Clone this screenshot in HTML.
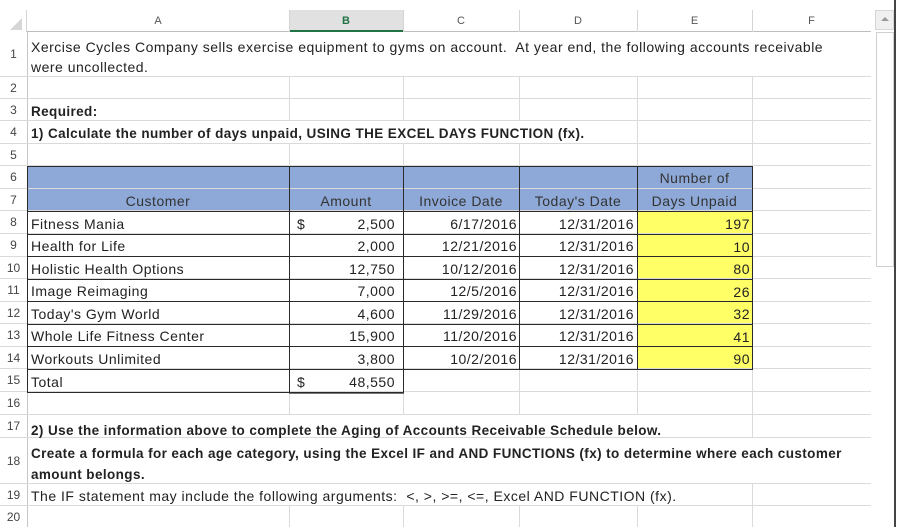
<!DOCTYPE html>
<html><head><meta charset="utf-8"><style>
*{margin:0;padding:0;box-sizing:border-box}
body{width:911px;height:527px;overflow:hidden;background:#fff;position:relative;font-family:"Liberation Sans",Arial,sans-serif;font-size:14px;color:#222;letter-spacing:.5px}
div{position:absolute}
.gv{width:1px;background:#dadada;top:32px;height:495px}
.gh{height:1px;background:#dadada;left:0;width:871px}
.dv{width:1px;background:#2a2a2a}
.dh{height:1px;background:#2a2a2a}
.rh{left:0;width:27px;text-align:center;font-size:12px;color:#444;letter-spacing:0}
.t{white-space:nowrap;padding:0 3px}
.b{font-weight:bold;font-size:13.5px;letter-spacing:.4px}
.r{text-align:right}
.c{text-align:center}
.ch{top:10px;height:22px;line-height:22px;text-align:center;font-size:11px;color:#555;letter-spacing:0}
</style></head><body>
<div style="left:27px;top:166px;width:725px;height:45px;background:#8ea9d7"></div>
<div style="left:637px;top:211px;width:115px;height:158px;background:#ffff66"></div>
<div style="left:0;top:10px;width:27px;height:22px;border-right:1px solid #d4d4d4"></div>
<div style="left:10px;top:18px;width:0;height:0;border-left:12px solid transparent;border-bottom:12px solid #d6d6d6"></div>
<div style="left:27px;top:31px;width:844px;height:1px;background:#bdbdbd"></div>
<div style="left:289px;top:10px;width:114px;height:22px;background:#e1e1e1;border-bottom:2px solid #217346"></div>
<div class="ch" style="left:27px;width:262px">A</div>
<div class="ch" style="left:289px;width:114px;color:#217346;font-weight:bold">B</div>
<div class="ch" style="left:403px;width:116px">C</div>
<div class="ch" style="left:519px;width:118px">D</div>
<div class="ch" style="left:637px;width:115px">E</div>
<div class="ch" style="left:752px;width:119px">F</div>
<div style="left:289px;top:10px;width:1px;height:22px;background:#d4d4d4"></div>
<div style="left:403px;top:10px;width:1px;height:22px;background:#d4d4d4"></div>
<div style="left:519px;top:10px;width:1px;height:22px;background:#d4d4d4"></div>
<div style="left:637px;top:10px;width:1px;height:22px;background:#d4d4d4"></div>
<div style="left:752px;top:10px;width:1px;height:22px;background:#d4d4d4"></div>
<div class="gv" style="left:27px;background:#c6c6c6"></div>
<div class="gv" style="left:289px"></div><div class="gv" style="left:403px"></div>
<div class="gv" style="left:519px"></div><div class="gv" style="left:637px"></div>
<div class="gv" style="left:752px"></div><div class="gv" style="left:871px;background:#c6c6c6"></div>
<div class="gh" style="top:76px"></div><div class="gh" style="top:98px"></div>
<div class="gh" style="top:120px"></div><div class="gh" style="top:143px"></div>
<div class="gh" style="top:165px"></div><div class="gh" style="top:188px"></div>
<div class="gh" style="top:210px"></div><div class="gh" style="top:233px"></div>
<div class="gh" style="top:256px"></div><div class="gh" style="top:278px"></div>
<div class="gh" style="top:301px"></div><div class="gh" style="top:323px"></div>
<div class="gh" style="top:346px"></div><div class="gh" style="top:368px"></div>
<div class="gh" style="top:391px"></div><div class="gh" style="top:414px"></div>
<div class="gh" style="top:437px"></div><div class="gh" style="top:483px"></div>
<div class="gh" style="top:505px"></div>
<div style="left:28px;top:32px;width:843px;height:44px;background:#fff"></div>
<div style="left:28px;top:121px;width:609px;height:22px;background:#fff"></div>
<div style="left:28px;top:415px;width:724px;height:22px;background:#fff"></div>
<div style="left:28px;top:438px;width:843px;height:45px;background:#fff"></div>
<div style="left:28px;top:484px;width:724px;height:21px;background:#fff"></div>
<div class="dv" style="left:27px;top:166px;height:226px"></div>
<div class="dv" style="left:289px;top:166px;height:226px"></div>
<div class="dv" style="left:403px;top:166px;height:226px"></div>
<div class="dv" style="left:519px;top:166px;height:203px"></div>
<div class="dv" style="left:637px;top:166px;height:203px"></div>
<div class="dv" style="left:752px;top:166px;height:203px"></div>
<div class="dh" style="left:27px;top:166px;width:726px"></div>
<div class="dh" style="left:27px;top:211px;width:726px"></div>
<div class="dh" style="left:27px;top:234px;width:726px"></div>
<div class="dh" style="left:27px;top:256px;width:726px"></div>
<div class="dh" style="left:27px;top:279px;width:726px"></div>
<div class="dh" style="left:27px;top:301px;width:726px"></div>
<div class="dh" style="left:27px;top:324px;width:726px"></div>
<div class="dh" style="left:27px;top:346px;width:726px"></div>
<div class="dh" style="left:27px;top:369px;width:726px"></div>
<div class="dh" style="left:27px;top:392px;width:377px"></div>
<div class="dh" style="left:289px;top:393px;width:115px;background:#777"></div>
<div class="rh" style="top:32px;height:45px;line-height:45px">1</div>
<div class="rh" style="top:77px;line-height:22px">2</div>
<div class="rh" style="top:99px;line-height:22px">3</div>
<div class="rh" style="top:121px;line-height:23px">4</div>
<div class="rh" style="top:144px;line-height:22px">5</div>
<div class="rh" style="top:166px;line-height:23px">6</div>
<div class="rh" style="top:189px;line-height:22px">7</div>
<div class="rh" style="top:211px;line-height:23px">8</div>
<div class="rh" style="top:234px;line-height:23px">9</div>
<div class="rh" style="top:257px;line-height:22px">10</div>
<div class="rh" style="top:279px;line-height:23px">11</div>
<div class="rh" style="top:302px;line-height:22px">12</div>
<div class="rh" style="top:324px;line-height:23px">13</div>
<div class="rh" style="top:347px;line-height:22px">14</div>
<div class="rh" style="top:369px;line-height:23px">15</div>
<div class="rh" style="top:392px;line-height:23px">16</div>
<div class="rh" style="top:415px;line-height:23px">17</div>
<div class="rh" style="top:438px;height:46px;line-height:46px">18</div>
<div class="rh" style="top:484px;line-height:22px">19</div>
<div class="rh" style="top:506px;line-height:22px">20</div>
<div class="t" style="left:28px;top:37px;line-height:20px;white-space:normal;width:812px">Xercise Cycles Company sells exercise equipment to gyms on account.&nbsp; At year end, the following accounts receivable were uncollected.</div>
<div class="t b" style="left:28px;top:100px;line-height:23px">Required:</div>
<div class="t b" style="left:28px;top:122px;line-height:23px">1) Calculate the number of days unpaid, USING THE EXCEL DAYS FUNCTION (fx).</div>
<div class="t c" style="left:27px;top:190px;width:262px;line-height:23px;color:#333">Customer</div>
<div class="t c" style="left:289px;top:190px;width:114px;line-height:23px;color:#333">Amount</div>
<div class="t c" style="left:403px;top:190px;width:116px;line-height:23px;color:#333">Invoice Date</div>
<div class="t c" style="left:519px;top:190px;width:118px;line-height:23px;color:#333">Today's Date</div>
<div class="t c" style="left:637px;top:167px;width:115px;line-height:23px;color:#333">Number of</div>
<div class="t c" style="left:637px;top:190px;width:115px;line-height:23px;color:#333">Days Unpaid</div>
<div class="t" style="left:28px;top:213px;line-height:23px">Fitness Mania</div>
<div class="t" style="left:28px;top:235px;line-height:23px">Health for Life</div>
<div class="t" style="left:28px;top:258px;line-height:23px">Holistic Health Options</div>
<div class="t" style="left:28px;top:280px;line-height:23px">Image Reimaging</div>
<div class="t" style="left:28px;top:303px;line-height:23px">Today's Gym World</div>
<div class="t" style="left:28px;top:325px;line-height:23px">Whole Life Fitness Center</div>
<div class="t" style="left:28px;top:348px;line-height:23px">Workouts Unlimited</div>
<div class="t" style="left:28px;top:371px;line-height:23px">Total</div>
<div class="t" style="left:294px;top:213px;line-height:23px">$</div>
<div class="t" style="left:294px;top:371px;line-height:23px">$</div>
<div class="t r" style="left:289px;width:109px;top:213px;line-height:23px">2,500</div>
<div class="t r" style="left:289px;width:109px;top:235px;line-height:23px">2,000</div>
<div class="t r" style="left:289px;width:109px;top:258px;line-height:23px">12,750</div>
<div class="t r" style="left:289px;width:109px;top:280px;line-height:23px">7,000</div>
<div class="t r" style="left:289px;width:109px;top:303px;line-height:23px">4,600</div>
<div class="t r" style="left:289px;width:109px;top:325px;line-height:23px">15,900</div>
<div class="t r" style="left:289px;width:109px;top:348px;line-height:23px">3,800</div>
<div class="t r" style="left:289px;width:109px;top:371px;line-height:23px">48,550</div>
<div class="t r" style="left:403px;width:117px;top:213px;line-height:23px">6/17/2016</div>
<div class="t r" style="left:403px;width:117px;top:235px;line-height:23px">12/21/2016</div>
<div class="t r" style="left:403px;width:117px;top:258px;line-height:23px">10/12/2016</div>
<div class="t r" style="left:403px;width:117px;top:280px;line-height:23px">12/5/2016</div>
<div class="t r" style="left:403px;width:117px;top:303px;line-height:23px">11/29/2016</div>
<div class="t r" style="left:403px;width:117px;top:325px;line-height:23px">11/20/2016</div>
<div class="t r" style="left:403px;width:117px;top:348px;line-height:23px">10/2/2016</div>
<div class="t r" style="left:519px;width:118px;top:213px;line-height:23px">12/31/2016</div>
<div class="t r" style="left:519px;width:118px;top:235px;line-height:23px">12/31/2016</div>
<div class="t r" style="left:519px;width:118px;top:258px;line-height:23px">12/31/2016</div>
<div class="t r" style="left:519px;width:118px;top:280px;line-height:23px">12/31/2016</div>
<div class="t r" style="left:519px;width:118px;top:303px;line-height:23px">12/31/2016</div>
<div class="t r" style="left:519px;width:118px;top:325px;line-height:23px">12/31/2016</div>
<div class="t r" style="left:519px;width:118px;top:348px;line-height:23px">12/31/2016</div>
<div class="t r" style="left:637px;width:115px;top:213px;line-height:23px;padding-right:2px">197</div>
<div class="t r" style="left:637px;width:115px;top:236px;line-height:23px;padding-right:2px">10</div>
<div class="t r" style="left:637px;width:115px;top:258px;line-height:23px;padding-right:2px">80</div>
<div class="t r" style="left:637px;width:115px;top:281px;line-height:23px;padding-right:2px">26</div>
<div class="t r" style="left:637px;width:115px;top:303px;line-height:23px;padding-right:2px">32</div>
<div class="t r" style="left:637px;width:115px;top:326px;line-height:23px;padding-right:2px">41</div>
<div class="t r" style="left:637px;width:115px;top:348px;line-height:23px;padding-right:2px">90</div>
<div class="t b" style="left:28px;top:419px;line-height:23px">2) Use the information above to complete the Aging of Accounts Receivable Schedule below.</div>
<div class="t b" style="left:28px;top:443px;line-height:21px;white-space:normal;width:843px">Create a formula for each age category, using the Excel IF and AND FUNCTIONS (fx) to determine where each customer amount belongs.</div>
<div class="t" style="left:28px;top:485px;line-height:23px">The IF statement may include the following arguments:&nbsp; &lt;, &gt;, &gt;=, &lt;=, Excel AND FUNCTION (fx).</div>
<div style="left:871px;top:0;width:24px;height:527px;background:#fff"></div>
<div style="left:875px;top:10px;width:19px;height:20px;background:#f0f0f0;border:1px solid #d6d6d6"></div>
<div style="left:881px;top:17px;width:0;height:0;border-left:4px solid transparent;border-right:4px solid transparent;border-bottom:4px solid #999"></div>
<div style="left:876px;top:32px;width:18px;height:235px;border:1px solid #cfcfcf;background:#fff"></div>
<div style="left:894px;top:0;width:2px;height:527px;background:#444"></div>
</body></html>
